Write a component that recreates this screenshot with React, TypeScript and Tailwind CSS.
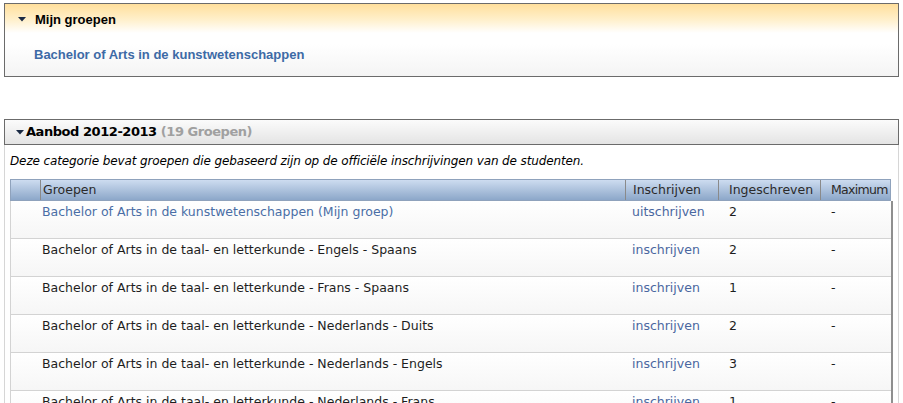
import React from "react";

type Row = {
  name: string;
  mine?: boolean;
  action: string;
  count: number;
};

const rows: Row[] = [
  { name: "Bachelor of Arts in de kunstwetenschappen (Mijn groep)", mine: true, action: "uitschrijven", count: 2 },
  { name: "Bachelor of Arts in de taal- en letterkunde - Engels - Spaans", action: "inschrijven", count: 2 },
  { name: "Bachelor of Arts in de taal- en letterkunde - Frans - Spaans", action: "inschrijven", count: 1 },
  { name: "Bachelor of Arts in de taal- en letterkunde - Nederlands - Duits", action: "inschrijven", count: 2 },
  { name: "Bachelor of Arts in de taal- en letterkunde - Nederlands - Engels", action: "inschrijven", count: 3 },
  { name: "Bachelor of Arts in de taal- en letterkunde - Nederlands - Frans", action: "inschrijven", count: 1 },
];

function Triangle() {
  return (
    <svg width="8" height="5" viewBox="0 0 8 5" className="shrink-0">
      <polygon points="0,0 8,0 4,4.5" fill="#1a2a44" />
    </svg>
  );
}

const gridCols = "grid grid-cols-[30px_585px_93px_102px_71px]";

export default function App() {
  return (
    <div className="bg-white h-[403px] overflow-hidden px-[4px] pt-[3px]">
      {/* Mijn groepen */}
      <div className="border border-[#6b6b6b] h-[74px] bg-[linear-gradient(to_bottom,#ffdf9c_0px,#fff0cc_16px,#ffffff_29px,#ffffff_40px,#f4f4f4_72px)] font-['Liberation_Sans',Arial,sans-serif]">
        <div className="flex items-center h-[31px] pl-[13px] gap-[9px]">
          <Triangle />
          <span className="text-[13px] leading-[16px] font-bold text-black">Mijn groepen</span>
        </div>
        <div className="pl-[29px] pt-[7px]">
          <a className="text-[13px] leading-[16px] font-bold text-[#3d6aa6] cursor-pointer">
            Bachelor of Arts in de kunstwetenschappen
          </a>
        </div>
      </div>

      {/* Aanbod */}
      <div className="mt-[42px] font-['DejaVu_Sans',Verdana,sans-serif]">
        <div className="border border-[#6b6b6b] h-[26px] flex items-center pl-[11px] gap-[2px] bg-[linear-gradient(to_bottom,#fbfbfb,#e4e4e4)]">
          <Triangle />
          <span className="text-[13px] font-bold text-black tracking-[-0.45px]">
            Aanbod 2012-2013 <span className="text-[#a0a0a0]">(19 Groepen)</span>
          </span>
        </div>
        <div className="border-x border-[#d6d6d6] pl-[5px] pr-[4px]">
          <p className="italic text-[12px] text-black h-[34px] pt-[8px] leading-[16px] tracking-[-0.12px]">
            Deze categorie bevat groepen die gebaseerd zijn op de officiële inschrijvingen van de studenten.
          </p>
          <div className="relative w-[883px]">
            <div className={`${gridCols} relative z-10 h-[22px] text-[12.5px] text-[#2a2a2a] whitespace-nowrap bg-[linear-gradient(to_bottom,#cddcf0,#8ca7c9)] border border-[#8fa2bc] w-[881px]`}>
              <div className="border-r border-[#8a8a8a]" />
              <div className="border-r border-[#8a8a8a] pl-[2px] leading-[20px]">Groepen</div>
              <div className="border-r border-[#8a8a8a] pl-[7px] leading-[20px]">Inschrijven</div>
              <div className="border-r border-[#8a8a8a] pl-[10px] leading-[20px]">Ingeschreven</div>
              <div className="pl-[10px] leading-[20px] tracking-[-0.7px]">Maximum</div>
            </div>
            <div className="border-r-2 border-[#8f8f8f]">
              {rows.map((r) => (
                <div
                  key={r.name}
                  className={`${gridCols} h-[38px] border-b border-l border-[#d3d3d3] text-[12.5px] leading-[16px] bg-[linear-gradient(to_bottom,#ffffff,#f6f6f6)]`}
                >
                  <div />
                  <div className={`pl-[1px] pt-[3px] ${r.mine ? "text-[#4a6ea6]" : "text-[#1e1e1e]"}`}>{r.name}</div>
                  <div className="pl-[6px] pt-[3px] text-[#4a67a0]">{r.action}</div>
                  <div className="pl-[10px] pt-[3px] text-[#1e1e1e]">{r.count}</div>
                  <div className="pl-[10px] pt-[3px] text-[#1e1e1e]">-</div>
                </div>
              ))}
            </div>
          </div>
        </div>
      </div>
    </div>
  );
}
